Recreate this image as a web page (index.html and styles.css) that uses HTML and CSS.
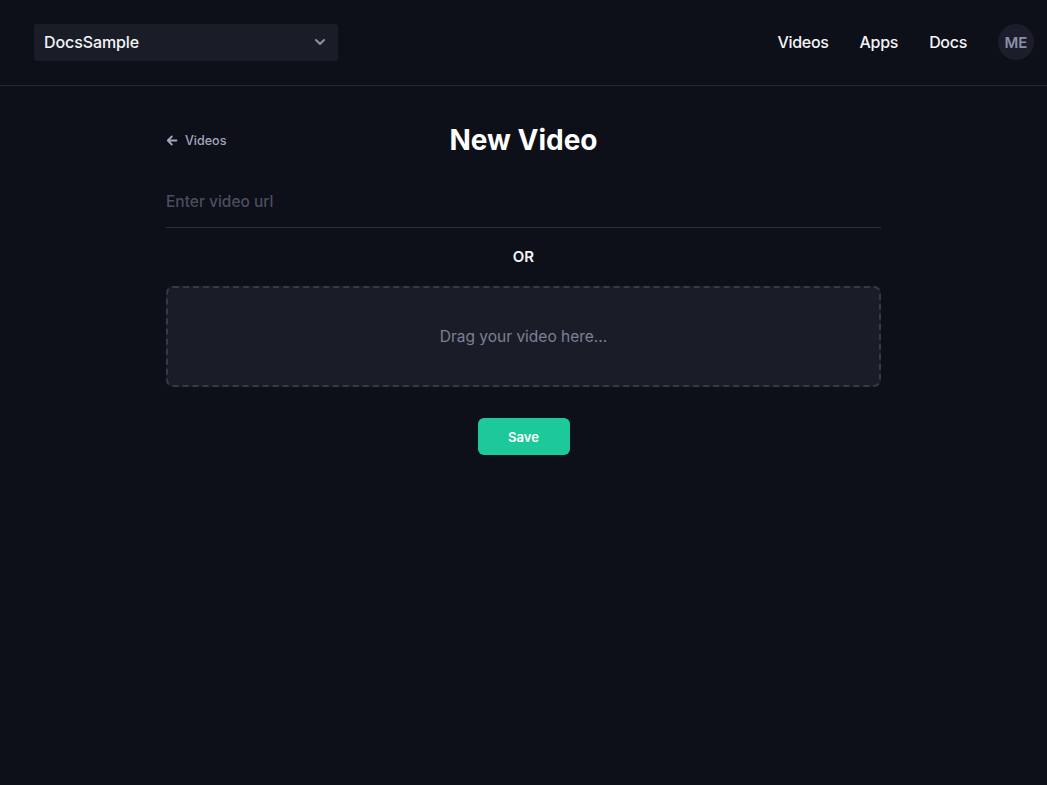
FILE: index.html
```html
<!DOCTYPE html>
<html lang="en">
<head>
<meta charset="utf-8">
<title>New Video</title>
<link rel="stylesheet" href="styles.css">
</head>
<body>
<header class="topbar">
  <div class="select">
    <span class="select-label">DocsSample</span>
    <svg class="chev" width="14" height="14" viewBox="0 0 14 14"><path d="M3 5l4 4 4-4" fill="none" stroke="#8d91a5" stroke-width="2" stroke-linecap="round" stroke-linejoin="round"/></svg>
  </div>
  <nav class="nav">
    <a class="nav-link">Videos</a>
    <a class="nav-link">Apps</a>
    <a class="nav-link">Docs</a>
    <span class="avatar">ME</span>
  </nav>
</header>
<main class="page">
  <div class="titlebar">
    <a class="back">
      <svg width="12" height="12" viewBox="0 0 12 12"><path d="M10.5 6H1.8M5.8 2L1.8 6l4 4" fill="none" stroke="#a3a7bb" stroke-width="1.8" stroke-linecap="round" stroke-linejoin="round"/></svg>
      <span>Videos</span>
    </a>
    <h1 class="title">New Video</h1>
  </div>
  <div class="url-field">
    <input class="url-input" type="text" placeholder="Enter video url">
  </div>
  <div class="or">OR</div>
  <div class="dropzone">Drag your video here...</div>
  <div class="actions">
    <button class="save">Save</button>
  </div>
</main>
</body>
</html>
```
FILE: styles.css
```css
* { box-sizing: border-box; }
html, body {
  margin: 0;
  background: #0d0f19;
  color: #ffffff;
  font-family: "Inter", "Lato", "Liberation Sans", sans-serif;
}
.topbar {
  height: 86px;
  display: flex;
  align-items: center;
  justify-content: space-between;
  padding: 0 13px 0 34px;
  border-bottom: 1px solid #262935;
}
.select {
  width: 304px;
  height: 37px;
  background: #1a1d28;
  border-radius: 3px;
  display: flex;
  align-items: center;
  justify-content: space-between;
  padding: 0 11px 0 10px;
  margin-top: -1px;
}
.select-label {
  font-size: 16px;
  font-weight: 500;
  color: #f4f5f8;
  letter-spacing: -0.1px;
}
.chev { display: block; }
.nav {
  display: flex;
  align-items: center;
  margin-top: -1px;
}
.nav-link {
  font-size: 16px;
  font-weight: 500;
  color: #f4f5f8;
  margin-right: 31px;
  letter-spacing: -0.3px;
}
.avatar {
  width: 36px;
  height: 36px;
  border-radius: 50%;
  background: #1b1e2a;
  color: #8a8ea8;
  font-size: 15px;
  font-weight: 600;
  display: flex;
  align-items: center;
  justify-content: center;
}
.page {
  width: 715px;
  margin: 0 auto;
  padding-top: 36px;
}
.titlebar {
  display: flex;
  align-items: center;
  justify-content: center;
  position: relative;
  height: 36px;
}
.back {
  position: absolute;
  left: 0;
  top: 50%;
  transform: translateY(-50%);
  display: flex;
  align-items: center;
  gap: 7px;
  font-size: 12.5px;
  font-weight: 500;
  color: #a3a7bb;
}
.back svg { display: block; }
.title {
  margin: 0;
  font-size: 28px;
  font-weight: 700;
  color: #ffffff;
  letter-spacing: 0;
}
.url-field {
  margin-top: 21px;
  border-bottom: 1px solid #2d303c;
}
.url-input {
  display: block;
  width: 100%;
  height: 48px;
  background: transparent;
  border: 0;
  outline: none;
  padding: 0 0 4px 0;
  font-family: inherit;
  font-size: 15.5px;
  font-weight: 500;
  color: #ffffff;
}
.url-input::placeholder { color: #4a4e5f; }
.or {
  text-align: center;
  font-size: 15px;
  font-weight: 600;
  color: #f4f5f8;
  margin-top: 20px;
  line-height: 18px;
}
.dropzone {
  margin-top: 20px;
  height: 101px;
  border: 2px dashed #363946;
  border-radius: 7px;
  background: #1a1d28;
  display: flex;
  align-items: center;
  justify-content: center;
  font-size: 15.5px;
  font-weight: 400;
  color: #7c8095;
}
.actions {
  display: flex;
  justify-content: center;
  margin-top: 31px;
}
.save {
  width: 92px;
  height: 37px;
  border: 0;
  border-radius: 6px;
  background: #1dc99a;
  color: #ffffff;
  font-family: inherit;
  font-size: 13px;
  font-weight: 600;
}
```
